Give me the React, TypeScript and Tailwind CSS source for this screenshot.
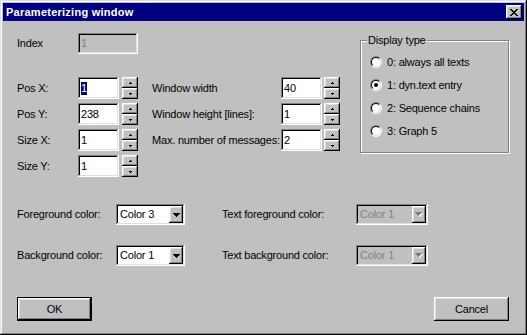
import React from "react";

const raised =
  "shadow-[inset_-1px_-1px_0_#000,inset_1px_1px_0_#fff,inset_-2px_-2px_0_#808080,inset_2px_2px_0_#dfdfdf]";
const sunken =
  "shadow-[inset_-1px_-1px_0_#fff,inset_1px_1px_0_#808080,inset_-2px_-2px_0_#dfdfdf,inset_2px_2px_0_#000]";

const UP = [".X.", "XXX"];
const DOWN = ["XXX", ".X."];
const COMBO = ["XXXXXXX", ".XXXXX.", "..XXX..", "...X..."];
const CLOSE = [
  "XX....XX",
  ".XX..XX.",
  "..XXXX..",
  "...XX...",
  "..XXXX..",
  ".XX..XX.",
  "XX....XX",
];

function Pix({ rows, color, shadow }: { rows: string[]; color: string; shadow?: string }) {
  const w = rows[0].length + (shadow ? 1 : 0);
  const h = rows.length + (shadow ? 1 : 0);
  const cells = (fill: string, d: number) =>
    rows.flatMap((r, y) =>
      r.split("").map((c, x) =>
        c === "X" ? (
          <rect key={`${fill}-${x}-${y}`} x={x + d} y={y + d} width={1} height={1} fill={fill} />
        ) : null
      )
    );
  return (
    <svg width={w} height={h} shapeRendering="crispEdges">
      {shadow && cells(shadow, 1)}
      {cells(color, 0)}
    </svg>
  );
}

function Spin() {
  return (
    <div className="flex flex-col w-4 h-[22px] ml-[3px]">
      <div className={`${raised} bg-[#c0c0c0] h-[11px] flex items-center justify-center`}>
        <Pix rows={UP} color="#000" />
      </div>
      <div className={`${raised} bg-[#c0c0c0] h-[11px] flex items-center justify-center`}>
        <Pix rows={DOWN} color="#000" />
      </div>
    </div>
  );
}

function NumField({ value, selected }: { value: string; selected?: boolean }) {
  return (
    <div className={`${sunken} bg-white w-[41px] h-[22px] flex items-center pl-[3px]`}>
      {selected ? <span className="bg-[#000080] text-white">{value}</span> : value}
    </div>
  );
}

function Row({ label, value, selected, mid }: { label: string; value: string; selected?: boolean; mid?: [string, string] }) {
  return (
    <div className="flex items-center h-[22px] whitespace-nowrap">
      <span className="w-[61px]">{label}</span>
      <NumField value={value} selected={selected} />
      <Spin />
      {mid && (
        <>
          <span className="ml-[14px] w-[129px]">{mid[0]}</span>
          <NumField value={mid[1]} />
          <div className="-ml-px">
            <Spin />
          </div>
        </>
      )}
    </div>
  );
}

function Combo({ value, width, disabled }: { value: string; width: string; disabled?: boolean }) {
  return (
    <div
      className={`${sunken} ${width} h-[21px] flex items-center pl-[4px] pr-[2px] ${
        disabled ? "bg-[#c0c0c0] text-[#808080]" : "bg-white"
      }`}
    >
      <span className="flex-1">{value}</span>
      <div className={`${raised} bg-[#c0c0c0] w-[14px] h-[17px] flex items-center justify-center`}>
        {disabled ? <Pix rows={COMBO} color="#808080" shadow="#fff" /> : <Pix rows={COMBO} color="#000" />}
      </div>
    </div>
  );
}

function Radio({ label, checked }: { label: string; checked?: boolean }) {
  return (
    <div className="flex items-center h-4">
      <div className="w-3 h-3 rounded-full border border-t-[#808080] border-l-[#808080] border-r-white border-b-white">
        <div className="w-[10px] h-[10px] rounded-full border border-t-black border-l-black border-r-[#dfdfdf] border-b-[#dfdfdf] bg-white flex items-center justify-center">
          {checked && <div className="w-1 h-1 rounded-full bg-black" />}
        </div>
      </div>
      <span className="ml-[5px]">{label}</span>
    </div>
  );
}

export default function App() {
  return (
    <div className="w-[527px] h-[335px] bg-[#c0c0c0] p-[3px] flex flex-col text-[11px] leading-[13px] tracking-[-0.2px] whitespace-nowrap text-black font-['Liberation_Sans',Arial,sans-serif] shadow-[inset_-1px_-1px_0_#000,inset_1px_1px_0_#dfdfdf,inset_-2px_-2px_0_#808080,inset_2px_2px_0_#fff]">
      {/* title bar */}
      <div className="h-[18px] bg-[#000080] flex items-center pl-[3px] pr-[2px]">
        <span className="text-white font-bold tracking-[0.25px]">Parameterizing window</span>
        <div className={`${raised} ml-auto w-4 h-[14px] bg-[#c0c0c0] flex items-center justify-center`}>
          <Pix rows={CLOSE} color="#000" />
        </div>
      </div>

      <div className="flex-1 flex flex-col pl-[14px] pr-[15px] pt-[12px]">
        <div className="flex items-start">
          <div className="flex flex-col">
            <div className="flex items-center h-[21px]">
              <span className="w-[61px]">Index</span>
              <div className={`${sunken} bg-[#c0c0c0] text-[#808080] w-[60px] h-[21px] flex items-center pl-[3px]`}>1</div>
            </div>
            <div className="mt-[23px] flex flex-col gap-[4px]">
              <Row label="Pos X:" value="1" selected mid={["Window width", "40"]} />
              <Row label="Pos Y:" value="238" mid={["Window height [lines]:", "1"]} />
              <Row label="Size X:" value="1" mid={["Max. number of messages:", "2"]} />
              <Row label="Size Y:" value="1" />
            </div>
          </div>

          {/* display type group */}
          <div className="ml-[20px] mt-[7px] relative w-[151px] h-[113px] border border-[#808080] shadow-[inset_1px_1px_0_#fff,1px_1px_0_#fff]">
            <span className="absolute left-[6px] top-[-7px] px-px bg-[#c0c0c0]">Display type</span>
            <div className="flex flex-col gap-[7px] pt-[13px] pl-[9px]">
              <Radio label="0: always all texts" />
              <Radio label="1: dyn.text entry" checked />
              <Radio label="2: Sequence chains" />
              <Radio label="3: Graph 5" />
            </div>
          </div>
        </div>

        <div className="mt-[27px] flex flex-col gap-[20px]">
          <div className="flex items-center h-[21px]">
            <span className="w-[99px]">Foreground color:</span>
            <Combo value="Color 3" width="w-[69px]" />
            <span className="ml-[37px] w-[134px]">Text foreground color:</span>
            <Combo value="Color 1" width="w-[72px]" disabled />
          </div>
          <div className="flex items-center h-[21px]">
            <span className="w-[99px]">Background color:</span>
            <Combo value="Color 1" width="w-[69px]" />
            <span className="ml-[37px] w-[134px]">Text background color:</span>
            <Combo value="Color 1" width="w-[72px]" disabled />
          </div>
        </div>

        <div className="mt-[31px] flex justify-between">
          <div className={`${raised} border border-black bg-[#c0c0c0] w-[75px] h-6 flex items-center justify-center`}>OK</div>
          <div className={`${raised} bg-[#c0c0c0] w-[75px] h-6 flex items-center justify-center`}>Cancel</div>
        </div>
      </div>
    </div>
  );
}
